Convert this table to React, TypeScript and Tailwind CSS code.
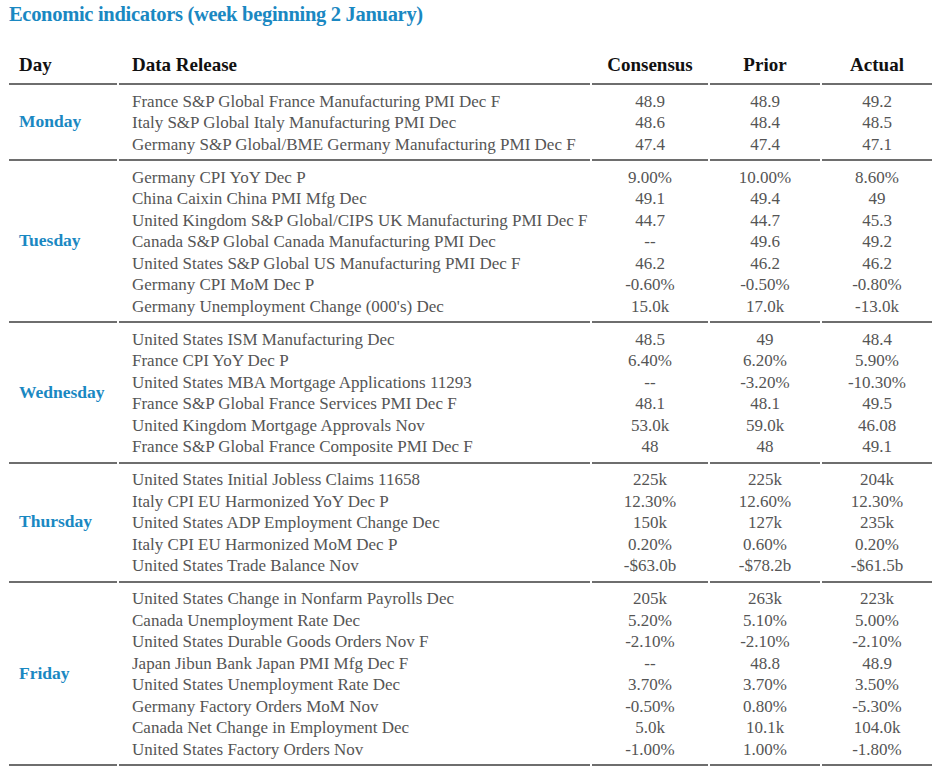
type Row = [string, string, string, string];

type Section = { day: string; rows: Row[] };

const sections: Section[] = [
  {
    day: "Monday",
    rows: [
      ["France S&P Global France Manufacturing PMI Dec F", "48.9", "48.9", "49.2"],
      ["Italy S&P Global Italy Manufacturing PMI Dec", "48.6", "48.4", "48.5"],
      ["Germany S&P Global/BME Germany Manufacturing PMI Dec F", "47.4", "47.4", "47.1"],
    ],
  },
  {
    day: "Tuesday",
    rows: [
      ["Germany CPI YoY Dec P", "9.00%", "10.00%", "8.60%"],
      ["China Caixin China PMI Mfg Dec", "49.1", "49.4", "49"],
      ["United Kingdom S&P Global/CIPS UK Manufacturing PMI Dec F", "44.7", "44.7", "45.3"],
      ["Canada S&P Global Canada Manufacturing PMI Dec", "--", "49.6", "49.2"],
      ["United States S&P Global US Manufacturing PMI Dec F", "46.2", "46.2", "46.2"],
      ["Germany CPI MoM Dec P", "-0.60%", "-0.50%", "-0.80%"],
      ["Germany Unemployment Change (000's) Dec", "15.0k", "17.0k", "-13.0k"],
    ],
  },
  {
    day: "Wednesday",
    rows: [
      ["United States ISM Manufacturing Dec", "48.5", "49", "48.4"],
      ["France CPI YoY Dec P", "6.40%", "6.20%", "5.90%"],
      ["United States MBA Mortgage Applications 11293", "--", "-3.20%", "-10.30%"],
      ["France S&P Global France Services PMI Dec F", "48.1", "48.1", "49.5"],
      ["United Kingdom Mortgage Approvals Nov", "53.0k", "59.0k", "46.08"],
      ["France S&P Global France Composite PMI Dec F", "48", "48", "49.1"],
    ],
  },
  {
    day: "Thursday",
    rows: [
      ["United States Initial Jobless Claims 11658", "225k", "225k", "204k"],
      ["Italy CPI EU Harmonized YoY Dec P", "12.30%", "12.60%", "12.30%"],
      ["United States ADP Employment Change Dec", "150k", "127k", "235k"],
      ["Italy CPI EU Harmonized MoM Dec P", "0.20%", "0.60%", "0.20%"],
      ["United States Trade Balance Nov", "-$63.0b", "-$78.2b", "-$61.5b"],
    ],
  },
  {
    day: "Friday",
    rows: [
      ["United States Change in Nonfarm Payrolls Dec", "205k", "263k", "223k"],
      ["Canada Unemployment Rate Dec", "5.20%", "5.10%", "5.00%"],
      ["United States Durable Goods Orders Nov F", "-2.10%", "-2.10%", "-2.10%"],
      ["Japan Jibun Bank Japan PMI Mfg Dec F", "--", "48.8", "48.9"],
      ["United States Unemployment Rate Dec", "3.70%", "3.70%", "3.50%"],
      ["Germany Factory Orders MoM Nov", "-0.50%", "0.80%", "-5.30%"],
      ["Canada Net Change in Employment Dec", "5.0k", "10.1k", "104.0k"],
      ["United States Factory Orders Nov", "-1.00%", "1.00%", "-1.80%"],
    ],
  },
];

const cell = "border-b-2 border-[#6e6e6e]";

export default function App() {
  return (
    <main className="min-h-screen bg-white px-[9px] pt-[2px] font-['Liberation_Serif',serif] text-[#555]">
      <h1 className="text-[20.5px] font-bold leading-6 tracking-[-0.3px] text-[#1a88c2]">
        Economic indicators (week beginning 2 January)
      </h1>

      <div className="w-[923px]">
        <div className="mt-[27px] flex gap-[2px] text-[19px] font-bold leading-6 text-[#111]">
          <div className={`w-[108px] pb-[6px] pl-[10px] ${cell}`}>Day</div>
          <div className={`w-[471px] pb-[6px] pl-[13px] ${cell}`}>Data Release</div>
          <div className={`w-[116px] pb-[6px] text-center ${cell}`}>Consensus</div>
          <div className={`w-[110px] pb-[6px] text-center ${cell}`}>Prior</div>
          <div className={`w-[110px] pb-[6px] text-center ${cell}`}>Actual</div>
        </div>

        {sections.map((section) => (
          <div key={section.day} className="flex gap-[2px] text-[17px] leading-[21.5px]">
            <div
              className={`flex w-[108px] items-center pl-[10px] text-[17.5px] font-bold text-[#1a88c2] ${cell}`}
            >
              {section.day}
            </div>
            <div className={`w-[471px] pb-[4px] pl-[13px] pt-[5.5px] ${cell}`}>
              {section.rows.map((r) => (
                <div key={r[0]} className="whitespace-nowrap">{r[0]}</div>
              ))}
            </div>
            <div className={`w-[116px] pb-[4px] pt-[5.5px] text-center ${cell}`}>
              {section.rows.map((r) => (
                <div key={r[0]}>{r[1]}</div>
              ))}
            </div>
            <div className={`w-[110px] pb-[4px] pt-[5.5px] text-center ${cell}`}>
              {section.rows.map((r) => (
                <div key={r[0]}>{r[2]}</div>
              ))}
            </div>
            <div className={`w-[110px] pb-[4px] pt-[5.5px] text-center ${cell}`}>
              {section.rows.map((r) => (
                <div key={r[0]}>{r[3]}</div>
              ))}
            </div>
          </div>
        ))}
      </div>
    </main>
  );
}
